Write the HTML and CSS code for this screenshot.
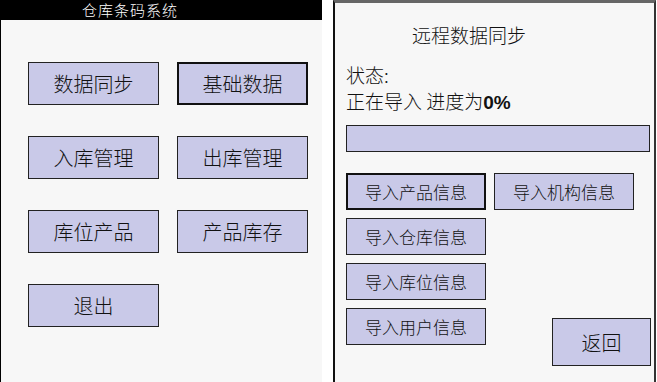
FILE: index.html
```html
<!DOCTYPE html>
<html lang="zh">
<head>
    <meta charset="UTF-8">
    <title>仓库条码系统</title>
    <link rel="stylesheet" href="styles.css">
</head>
<body>
    <!-- 主菜单 -->
    <div class="panel main-panel">
        <div class="title-bar">仓库条码系统</div>
        <div class="menu-grid">
            <button class="btn">数据同步</button>
            <button class="btn focused">基础数据</button>
            <button class="btn">入库管理</button>
            <button class="btn">出库管理</button>
            <button class="btn">库位产品</button>
            <button class="btn">产品库存</button>
            <button class="btn">退出</button>
        </div>
    </div>

    <!-- 远程数据同步 -->
    <div class="panel sync-panel">
        <div class="sync-title">远程数据同步</div>
        <div class="status">状态:</div>
        <div class="status">正在导入 进度为<b>0%</b></div>
        <div class="progress"></div>
        <div class="sync-body">
            <div class="sync-col">
                <button class="btn small focused">导入产品信息</button>
                <button class="btn small">导入仓库信息</button>
                <button class="btn small">导入库位信息</button>
                <button class="btn small">导入用户信息</button>
            </div>
            <div class="sync-side">
                <button class="btn small">导入机构信息</button>
                <button class="btn back">返回</button>
            </div>
        </div>
    </div>
</body>
</html>
```

FILE: styles.css
```css
/* 基本样式 */
body {
    margin: 0;
    height: 382px;
    overflow: hidden;
    background-color: #ffffff;
    display: flex;
    font-family: "Noto Sans CJK SC", "DejaVu Sans", sans-serif;
    color: #111;
}

.panel {
    background-color: #f7f7f7;
    box-sizing: border-box;
    height: 100%;
}

/* 左侧主菜单 */
.main-panel {
    width: 322px;
    border-left: 1px solid #000;
}

.title-bar {
    background-color: #000;
    color: #fff;
    height: 20px;
    line-height: 20px;
    font-size: 15px;
    letter-spacing: 1px;
    font-weight: 300;
    padding-left: 81px;
    overflow: hidden;
}

.menu-grid {
    display: grid;
    grid-template-columns: 131px 131px;
    grid-auto-rows: 43px;
    column-gap: 18px;
    row-gap: 31px;
    padding: 42px 0 0 27px;
}

/* 按钮 */
.btn {
    background-color: #c9c9e8;
    border: 1px solid #222;
    color: #111;
    font-family: inherit;
    font-size: 20px;
    font-weight: 300;
    padding: 0;
    margin: 0;
    box-sizing: border-box;
}

.btn.focused {
    border: 2px solid #111;
}

/* 右侧同步窗口 */
.sync-panel {
    margin-left: 11px;
    width: 323px;
    border-left: 2px solid #111;
    border-right: 2px solid #333;
    border-top: 3px solid #666;
    padding-left: 11px;
}

.sync-title {
    font-size: 19px;
    line-height: 24px;
    font-weight: 300;
    margin: 20px 0 0 66px;
}

.status {
    font-size: 19px;
    line-height: 26px;
    font-weight: 300;
}

.sync-title + .status {
    margin-top: 15px;
}

.status b {
    font-family: "Liberation Sans", sans-serif;
    font-weight: bold;
}

.progress {
    margin-top: 9px;
    width: 304px;
    height: 27px;
    box-sizing: border-box;
    background-color: #c9c9e8;
    border: 1px solid #222;
}

.sync-body {
    display: flex;
    gap: 8px;
    margin-top: 21px;
}

.sync-col {
    display: flex;
    flex-direction: column;
    gap: 8px;
}

.btn.small {
    width: 140px;
    height: 37px;
    font-size: 17px;
}

.sync-side {
    display: flex;
    flex-direction: column;
    width: 157px;
    height: 193px;
}

.btn.back {
    margin-top: auto;
    align-self: flex-end;
    width: 99px;
    height: 48px;
    font-size: 20px;
}
```
